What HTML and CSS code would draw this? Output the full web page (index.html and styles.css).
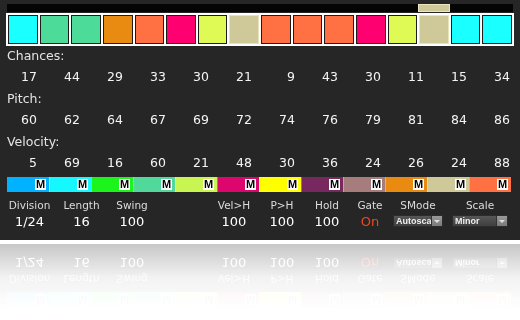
FILE: index.html
```html
<!DOCTYPE html>
<html lang="en">
<head>
    <meta charset="UTF-8">
    <meta name="viewport" content="width=device-width, initial-scale=1.0">
    <title>Step Sequencer</title>
    <link rel="stylesheet" href="styles.css">
</head>
<body>
    <div class="panel">
        <!-- Scroll bar -->
        <div class="scroll">
            <div class="thumb"></div>
        </div>

        <!-- Steps -->
        <div class="steps">
            <div class="step c-cyan"></div>
            <div class="step c-mint"></div>
            <div class="step c-mint"></div>
            <div class="step c-orange"></div>
            <div class="step c-coral"></div>
            <div class="step c-pink"></div>
            <div class="step c-lime"></div>
            <div class="step c-beige"></div>
            <div class="step c-coral"></div>
            <div class="step c-coral"></div>
            <div class="step c-coral"></div>
            <div class="step c-pink"></div>
            <div class="step c-lime"></div>
            <div class="step c-beige"></div>
            <div class="step c-cyan"></div>
            <div class="step c-cyan"></div>
        </div>

        <!-- Lanes -->
        <div class="lane">
            <div class="lane-title">Chances:</div>
            <div class="lane-values">
                <span>17</span><span>44</span><span>29</span><span>33</span><span>30</span><span>21</span>
                <span>9</span><span>43</span><span>30</span><span>11</span><span>15</span><span>34</span>
            </div>
        </div>
        <div class="lane">
            <div class="lane-title">Pitch:</div>
            <div class="lane-values">
                <span>60</span><span>62</span><span>64</span><span>67</span><span>69</span><span>72</span>
                <span>74</span><span>76</span><span>79</span><span>81</span><span>84</span><span>86</span>
            </div>
        </div>
        <div class="lane">
            <div class="lane-title">Velocity:</div>
            <div class="lane-values">
                <span>5</span><span>69</span><span>16</span><span>60</span><span>21</span><span>48</span>
                <span>30</span><span>36</span><span>24</span><span>26</span><span>24</span><span>88</span>
            </div>
        </div>

        <!-- Note colours with mute buttons -->
        <div class="colorbar">
            <div class="seg" style="background:#00b2ff"><span class="mute">M</span></div>
            <div class="seg" style="background:#16f8ff"><span class="mute">M</span></div>
            <div class="seg" style="background:#1cf51c"><span class="mute">M</span></div>
            <div class="seg" style="background:#50d99a"><span class="mute">M</span></div>
            <div class="seg" style="background:#c8f552"><span class="mute">M</span></div>
            <div class="seg" style="background:#dc066e"><span class="mute">M</span></div>
            <div class="seg" style="background:#ffff00"><span class="mute">M</span></div>
            <div class="seg" style="background:#76285f"><span class="mute">M</span></div>
            <div class="seg" style="background:#a67c7c"><span class="mute">M</span></div>
            <div class="seg" style="background:#e88b10"><span class="mute">M</span></div>
            <div class="seg" style="background:#cfc898"><span class="mute">M</span></div>
            <div class="seg" style="background:#ff7043"><span class="mute">M</span></div>
        </div>

        <!-- Controls -->
        <div class="controls">
            <div class="ctl">
                <div class="ctl-label">Division</div>
                <div class="ctl-value">1/24</div>
            </div>
            <div class="ctl">
                <div class="ctl-label">Length</div>
                <div class="ctl-value">16</div>
            </div>
            <div class="ctl">
                <div class="ctl-label">Swing</div>
                <div class="ctl-value">100</div>
            </div>
            <div class="ctl ctl-right">
                <div class="ctl-label">Vel&gt;H</div>
                <div class="ctl-value">100</div>
            </div>
            <div class="ctl">
                <div class="ctl-label">P&gt;H</div>
                <div class="ctl-value">100</div>
            </div>
            <div class="ctl">
                <div class="ctl-label">Hold</div>
                <div class="ctl-value">100</div>
            </div>
            <div class="ctl">
                <div class="ctl-label">Gate</div>
                <div class="ctl-value on">On</div>
            </div>
            <div class="ctl">
                <div class="ctl-label">SMode</div>
                <div class="select smode">
                    <span class="select-text">Autoscale</span>
                    <span class="select-arrow"></span>
                </div>
            </div>
            <div class="ctl">
                <div class="ctl-label">Scale</div>
                <div class="select scale">
                    <span class="select-text">Minor</span>
                    <span class="select-arrow"></span>
                </div>
            </div>
        </div>
    </div>
</body>
</html>
```

FILE: styles.css
```css
* {
    margin: 0;
    padding: 0;
    box-sizing: border-box;
}

body {
    background-color: #ffffff;
    width: 520px;
    height: 320px;
    overflow: hidden;
}

.panel {
    width: 520px;
    background-color: #262626;
    font-family: "DejaVu Sans", Verdana, sans-serif;
    color: #f0f0f0;
    padding: 4px 0 10px;
    -webkit-box-reflect: below 4px linear-gradient(to bottom, transparent 73%, rgba(0, 0, 0, 0.06) 86%, rgba(0, 0, 0, 0.26));
}

/* scroll bar + steps */
.scroll {
    position: relative;
    height: 8px;
    margin: 0 7px;
    background-color: #050505;
}

.thumb {
    position: absolute;
    left: 411px;
    top: 0;
    width: 32px;
    height: 8px;
    background-color: #cfc898;
    border: 1px solid #ece6c2;
}

.steps {
    display: grid;
    grid-template-columns: repeat(16, 1fr);
    gap: 2px;
    margin: 1px 6px 0;
    padding: 2px;
    background-color: #ffffff;
}

.step {
    height: 29px;
    border: 1px solid #1c1c1c;
}

.c-cyan { background-color: #1affff; }
.c-mint { background-color: #4ddb9a; }
.c-orange { background-color: #e88b10; }
.c-coral { background-color: #ff7043; }
.c-pink { background-color: #ff0070; }
.c-lime { background-color: #dffa55; }
.c-beige { background-color: #cfc898; border-color: #e9e3bc; }

/* lanes */
.steps + .lane {
    margin-top: 2px;
}

.lane-title {
    margin-left: 7px;
    font-size: 12.5px;
    line-height: 15px;
    color: #e4e4e4;
}

.lane-values {
    display: grid;
    grid-template-columns: 37px repeat(11, 43px);
    margin: 6px 0 7px;
    font-size: 12.5px;
    line-height: 15px;
    text-align: right;
    color: #f4f4f4;
}

/* colour bar */
.colorbar {
    display: flex;
    height: 15px;
    margin: 5px 9px 0 7px;
}

.seg {
    flex: 1;
    display: flex;
    justify-content: flex-end;
    align-items: center;
    padding-right: 3px;
    box-shadow: inset 1px 0 0 rgba(255, 255, 255, 0.3);
}

.seg:first-child {
    box-shadow: none;
}

.mute {
    width: 11px;
    height: 11px;
    background-color: #ffffff;
    color: #000000;
    font: bold 11px/11px "Liberation Sans", Arial, sans-serif;
    text-align: center;
}

/* controls */
.controls {
    display: grid;
    grid-template-columns: 59px 45px 56px 48px 52px 44px 46px 40px 56px 68px;
    margin-top: 7px;
}

.ctl {
    display: flex;
    flex-direction: column;
    align-items: center;
}

.ctl-right {
    grid-column: 5;
}

.ctl-label {
    font-size: 10.5px;
    line-height: 13px;
    color: #dcdcdc;
}

.ctl-value {
    margin-top: 2px;
    font-size: 13px;
    line-height: 16px;
    color: #ffffff;
}

.ctl-value.on {
    color: #f2481a;
}

.select {
    display: flex;
    height: 12px;
    margin-top: 3px;
    background: linear-gradient(#575757, #3f3f3f);
    border: 1px solid #2c2c2c;
    overflow: hidden;
}

.smode {
    width: 50px;
}

.scale {
    width: 56px;
}

.select-text {
    flex: 1;
    overflow: hidden;
    white-space: nowrap;
    padding-left: 2px;
    font: bold 9px/10px "Liberation Sans", Arial, sans-serif;
    color: #eeeeee;
}

.select-arrow {
    width: 11px;
    display: flex;
    justify-content: center;
    align-items: center;
    background: linear-gradient(#9a9a9a, #7a7a7a);
    border-left: 1px solid #333;
}

.select-arrow::after {
    content: "";
    border-left: 3px solid transparent;
    border-right: 3px solid transparent;
    border-top: 3px solid #e0e0e0;
}
```
